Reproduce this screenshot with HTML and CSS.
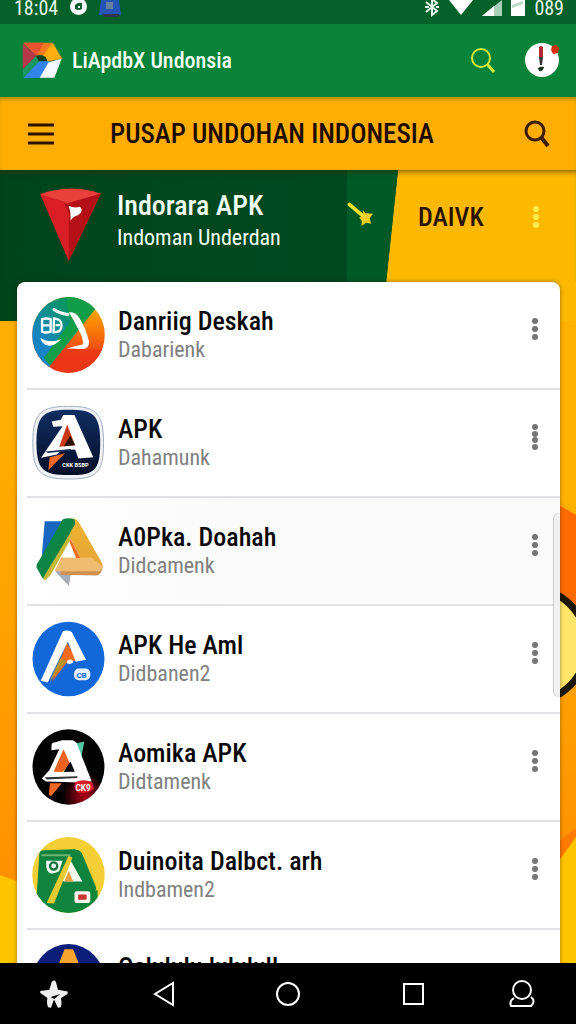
FILE: index.html
```html
<!DOCTYPE html>
<html lang="id">

<head>
  <meta charset="UTF-8">
  <meta name="viewport" content="width=device-width, initial-scale=1.0">
  <title>Pusat Unduhan Indonesia</title>
  <link rel="stylesheet" href="styles.css">
</head>

<body>
  <div class="status-bar">
    <span class="clock">18:04</span>
    <svg width="17" height="18" viewBox="0 0 17 18"><circle cx="8.500" cy="6.500" r="8.500" fill="#fff"/><path d="M5 5q3-3 7-2v6q-3 2-7 0zM8 6h2v2H8z" fill="#075f2c" fill-rule="evenodd"/></svg>
    <svg class="status-app" width="24" height="20" viewBox="0 0 24 20"><path d="M2 0h18l2 15H0z" fill="#2454b4"/><path d="M7 2h7v7H7z" fill="#6a80a0"/><path d="M3 14h17v3H6z" fill="#34334c"/></svg>
    <div class="status-icons">
      <svg width="16" height="18" viewBox="0 0 16 18" fill="none" stroke="#e8f5ec" stroke-width="2"><path d="M2 2l11 9-5 4V-1l5 4-11 9M1 7h4M12 7h3"/></svg>
      <svg width="24" height="18" viewBox="0 0 24 18"><path d="M0 0h24L12 15z" fill="#fff"/></svg>
      <svg width="20" height="18" viewBox="0 0 20 18"><path d="M20 0v16H0z" fill="#a9d0b8"/><path d="M12 6v10H0z" fill="#fff"/></svg>
      <svg width="14" height="18" viewBox="0 0 14 18"><path d="M0 0h14v16H0z" fill="#fff"/><path d="M1 5L12 1v3L1 8z" fill="#b9d8c5"/></svg>
      <span class="battery">089</span>
    </div>
  </div>

  <header class="app-bar">
    <svg class="logo" width="40" height="37" viewBox="66 124 120 110">
      <path d="M70 126h88l28 48-42 8-16-18H108l-38-38z" fill="#f57a20"/>
      <path d="M70 126h62l-22 38z" fill="#e9532d"/>
      <path d="M68 128l42 36-42 42z" fill="#b4374a"/>
      <path d="M158 126l28 48-44 6-12-17z" fill="#ffad10"/>
      <path d="M68 206l42-42 9 15-36 50H70z" fill="#199760"/>
      <path d="M70 232l49-52 30 2-29 49z" fill="#3484ec"/>
      <path d="M119 231l27-47 39-10-22 57z" fill="#f5f8ff"/>
      <path d="M108 165q18-5 30 4l4 12h-26z" fill="#13401d"/>
    </svg>
    <span class="app-name">LiApdbX Undonsia</span>
    <button class="icon-btn" aria-label="Search app">
      <svg width="26" height="26" viewBox="0 0 26 26" fill="none" stroke="#d3e83c" stroke-width="2"><circle cx="11" cy="10" r="9"/><path d="M17 16l7 8" stroke-width="3"/></svg>
    </button>
    <button class="icon-btn alert-btn" aria-label="Notifications">
      <svg width="36" height="38" viewBox="0 0 36 38"><circle cx="18" cy="18" r="17" fill="#fff"/><path d="M15 5q2-2 4 0v10h-4z" fill="#b72635"/><path d="M15 15h4l-1 8h-2z" fill="#3b3437"/><path d="M14 26q3-2 6-1-1 5-5 4z" fill="#173524"/><path d="M28 4l4-1 3 3-1 5-5 1-2-4z" fill="#d82b13"/></svg>
    </button>
  </header>

  <div class="title-bar">
    <button class="icon-btn" aria-label="Menu">
      <svg width="26" height="22" viewBox="0 0 26 22" stroke="#2b1200" stroke-width="3"><path d="M0 2h26M0 11h26M0 20h26"/></svg>
    </button>
    <h1>PUSAP UNDOHAN INDONESIA</h1>
    <button class="icon-btn" aria-label="Search downloads">
      <svg width="26" height="28" viewBox="0 0 26 28" fill="none" stroke="#3d1c00" stroke-width="3"><circle cx="11" cy="11" r="9"/><path d="M17 17l7 9" stroke-width="4"/></svg>
    </button>
  </div>

  <main>
    <svg class="backdrop" viewBox="0 0 576 793" preserveAspectRatio="none">
      <defs>
        <linearGradient id="side" x1="0" y1="0" x2="0" y2="1"><stop offset=".2" stop-color="#ffad00"/><stop offset="1" stop-color="#ff9000"/></linearGradient>
        <linearGradient id="dark" x1="0" y1="0" x2="1" y2="0"><stop offset="0" stop-color="#00441c"/><stop offset="1" stop-color="#004a20"/></linearGradient>
      </defs>
      <path d="M0 0h576v793H0z" fill="#ffc400"/>
      <path d="M0 150h200v580Q60 730 0 705z" fill="url(#side)"/>
      <path d="M500 151h76v220h-76z" fill="#ffb300"/>
      <path d="M540 320l36 21v317l-36 34z" fill="url(#side)"/>
      <path d="M540 324l36 21v150h-36z" fill="#ff6a00"/>
      <path d="M556 674l20-16v9l-20 28z" fill="#ff7a00"/>
      <circle cx="530" cy="475" r="57" fill="#ffe569" stroke="#1c1803" stroke-width="7"/>
      <path d="M370 0h206v151H370z" fill="#fcb900"/>
      <path d="M0 0h398l-16 151H0z" fill="url(#dark)"/>
      <path d="M347 0h51l-16 151h-35z" fill="#005a26"/>
    </svg>

    <section class="hero">
      <svg width="61" height="73" viewBox="120 52 181 219">
        <path d="M120 71q90-32 181-2l-96 202z" fill="#d91f25"/>
        <path d="M120 71q90-32 181-2l-96 28z" fill="#e9403c"/>
        <path d="M205 97l96-28-96 202z" fill="#b51018"/>
        <path d="M192 97l19 8v43l-8-28z" fill="#a50d16"/>
        <path d="M205 105q18 9 34 3 12 12-5 25-17 5-23 17l-1-25z" fill="#fff"/>
      </svg>
      <div class="hero-text">
        <h2>Indorara APK</h2>
        <p>Indoman Underdan</p>
      </div>
      <svg class="arrow" width="26" height="24" viewBox="140 92 79 73"><path d="M147 99l45 38" stroke="#f2e22d" stroke-width="11" stroke-linecap="round"/><path d="M188 116l8 10 23 2-10 13 4 17-15-3-14 10 1-16-8-10 13-4z" fill="#f0cf25"/></svg>
      <span class="tag">DAIVK</span>
      <button class="more more-light" aria-label="More">
        <svg width="8" height="24" viewBox="0 0 8 24"><circle cx="4" cy="4" r="3"/><circle cx="4" cy="12" r="3"/><circle cx="4" cy="20" r="3"/></svg>
      </button>
    </section>

    <ul class="card">
      <li class="row">
        <svg class="app-icon" viewBox="96 48 220 230">
          <defs>
            <clipPath id="c1"><ellipse cx="206" cy="163" rx="110" ry="115"/></clipPath>
            <linearGradient id="g1" x1="0" y1="0" x2="0" y2="1"><stop offset=".2" stop-color="#ffa000"/><stop offset=".8" stop-color="#ed3b16"/></linearGradient>
            <linearGradient id="g2" x1="1" y1="0" x2="0" y2="1"><stop offset=".3" stop-color="#0b9564"/><stop offset=".75" stop-color="#1684c4"/></linearGradient>
          </defs>
          <g clip-path="url(#c1)">
            <path d="M96 48h220v230H96z" fill="url(#g1)"/>
            <path d="M96 48h160l35 30-146 185H96z" fill="url(#g2)"/>
            <path d="M198 48h70l23 30-141 178-18-24 80-110z" fill="#129d48"/>
            <path d="M150 256l42-52 124 4v70H150z" fill="#ea3519" opacity=".7"/>
          </g>
          <path d="M162 86q18 12 42 15" fill="none" stroke="#fff" stroke-width="9" stroke-linecap="round"/>
          <path d="M207 94q20-2 31 16 22 35 30 73 0 21-17 22l-50-1q24-8 48-12 4-16-14-47-12-27-28-51z" fill="#fff"/>
          <path d="M126 115q14-4 26 0v38q-14 5-26 0zM162 113q24 1 23 22 0 20-24 20zM128 134h20M167 133h13" fill="none" stroke="#fff" stroke-width="7"/>
          <path d="M121 171q28 19 63 4-19 22-39 20-20-3-24-24z" fill="#fff"/>
        </svg>
        <div class="info"><h3>Danriig Deskah</h3><p>Dabarienk</p></div>
        <button class="more" aria-label="More"><svg width="8" height="24" viewBox="0 0 8 24"><circle cx="4" cy="4" r="3"/><circle cx="4" cy="12" r="3"/><circle cx="4" cy="20" r="3"/></svg></button>
      </li>
      <li class="row">
        <svg class="app-icon" viewBox="96 371 220 230">
          <defs><linearGradient id="g3" x1="0" y1="0" x2="0" y2="1"><stop offset="0" stop-color="#102e62"/><stop offset="1" stop-color="#050d26"/></linearGradient></defs>
          <path d="M206 375c80 0 106 16 106 110s-22 110-106 110-108-20-108-110 25-110 108-110z" fill="#eef2f7" stroke="#a5adba" stroke-width="3"/>
          <path d="M206 385c73 0 96 12 96 100s-20 98-96 98-97-16-97-98 20-100 97-100z" fill="url(#g3)"/>
          <path d="M190 401h34l57 128-45 4-10-27-43 1-12 14-48 10 65-96-28 2-5-16 28-5z" fill="#fff"/>
          <path d="M202 430l-24 67 48-4z" fill="#c73917"/><path d="M211 464l15 29-34 3z" fill="#28110c"/>
          <path d="M136 512l77-8v5l-69 7z" fill="#1b315c"/>
          <path d="M149 529l47-12-35 35-16 17z" fill="#f26725"/>
          <text x="187" y="560" class="icon-label">CKK BSBP</text>
        </svg>
        <div class="info"><h3>APK</h3><p>Dahamunk</p></div>
        <button class="more" aria-label="More"><svg width="8" height="28" viewBox="0 0 8 28"><circle cx="4" cy="4" r="3"/><circle cx="4" cy="11" r="3"/><circle cx="4" cy="17" r="3"/><circle cx="4" cy="24" r="3"/></svg></button>
      </li>
      <li class="row row-tint">
        <svg class="app-icon" viewBox="96 68 220 230">
          <defs><linearGradient id="g4" x1="0" y1="0" x2="0" y2="1"><stop offset="0" stop-color="#edb52e"/><stop offset="1" stop-color="#e6a23a"/></linearGradient></defs>
          <path d="M134 93h54l-60 108-2-12z" fill="#1766c0"/>
          <path d="M170 237l44 9-7 43-39-42z" fill="#a8abb8"/>
          <path d="M182 235h126v4q-6 17-17 18l-109-2z" fill="#cf9152"/>
          <path d="M212 85q19-3 27 14l69 122q4 12-4 22H170l14-40h57l-29-58-42 66z" fill="url(#g4)"/>
          <path d="M184 203h90l34 25q2 13-10 16H164z" fill="#f0bc72"/>
          <path d="M211 147l28 56h-51z" fill="#fff"/><path d="M212 147l30 57h-13l-21-51z" fill="#f06c22"/>
          <path d="M188 88q16-8 36-1 6 13-5 26l-79 153q-10 5-15-5l-16-29q-1-10 7-18z" fill="#0d8545"/>
          <path d="M216 121l-6 30-58 105-18 16-4-9z" fill="#c7b838"/>
        </svg>
        <div class="info"><h3>A0Pka. Doahah</h3><p>Didcamenk</p></div>
        <button class="more" aria-label="More"><svg width="8" height="24" viewBox="0 0 8 24"><circle cx="4" cy="4" r="3"/><circle cx="4" cy="12" r="3"/><circle cx="4" cy="20" r="3"/></svg></button>
      </li>
      <li class="row">
        <svg class="app-icon" viewBox="95 396 220 230">
          <ellipse cx="205" cy="511" rx="109" ry="113" fill="#1267d9"/>
          <path d="M200 461l32 54-30 4-47 61z" fill="#f36b1b"/>
          <path d="M180 508l20 10-52 60z" fill="#b99228"/>
          <path d="M188 427q15-5 27 2l43 84-31 6-24-61-61 124-21-5z" fill="#fff"/>
          <path d="M200 517q15-10 20 3-9 10-20 4z" fill="#fff"/>
          <rect x="222" y="540" width="49" height="35" rx="14" fill="#e5f1ff"/>
          <text x="229" y="568" class="icon-label label-blue">CB</text>
        </svg>
        <div class="info"><h3>APK He Aml</h3><p>Didbanen2</p></div>
        <button class="more" aria-label="More"><svg width="8" height="24" viewBox="0 0 8 24"><circle cx="4" cy="4" r="3"/><circle cx="4" cy="12" r="3"/><circle cx="4" cy="20" r="3"/></svg></button>
      </li>
      <li class="row">
        <svg class="app-icon" viewBox="94 57 220 230">
          <defs><radialGradient id="g5" cx=".72" cy=".88" r=".3"><stop offset="0" stop-color="#b00018"/><stop offset="1" stop-color="#030304"/></radialGradient></defs>
          <ellipse cx="204" cy="172" rx="109" ry="114" fill="url(#g5)"/>
          <path d="M226 101l26-6-9 46z" fill="#54c7a2"/>
          <path d="M153 103q3-7 12-6l19-6h33l11 7 46 117-33 4-105-3-13-9 12-13 11-12 30-64-24 3z" fill="#fff"/>
          <path d="M189 118l-30 68 27 1 23-24z" fill="#ec6221"/><path d="M210 155l13 31-34 1z" fill="#07090b"/>
          <path d="M132 203l99-3v5l-93 5z" fill="#333"/><path d="M148 221h36l-32 39q-10-3-7-11z" fill="#ee6824"/>
          <path d="M224 218q25-12 52 0l6 20q-25 19-53 10l-7-13z" fill="#d51d2b"/>
          <text x="225" y="246" class="icon-label label-red">CK9</text>
        </svg>
        <div class="info"><h3>Aomika APK</h3><p>Didtamenk</p></div>
        <button class="more" aria-label="More"><svg width="8" height="24" viewBox="0 0 8 24"><circle cx="4" cy="4" r="3"/><circle cx="4" cy="12" r="3"/><circle cx="4" cy="20" r="3"/></svg></button>
      </li>
      <li class="row">
        <svg class="app-icon" viewBox="94 377 220 230">
          <defs><clipPath id="c6"><ellipse cx="204" cy="492" rx="110" ry="115"/></clipPath></defs>
          <g clip-path="url(#c6)">
            <path d="M94 377h220v230H94z" fill="#f3ce35"/>
            <path d="M94 542l24 4 174-8v69H94z" fill="#0e8538"/>
            <path d="M116 426q2-9 13-9l92-3q18 1 24 13l42 101q3 11-10 15l-43 51H136q-30-7-29-28z" fill="#10833e"/>
            <path d="M122 432h88" fill="none" stroke="#6eb56d" stroke-width="6"/>
            <path d="M204 437l42 75h-53l-14-3z" fill="#f5f9ec"/><path d="M205 480l13 32h-27z" fill="#e5a141"/>
            <path d="M204 434l12 6-56 138-22-1z" fill="#e7cb31"/>
            <path d="M136 449h50l-10 32q-34 17-39-12z" fill="#f1f7ef"/><circle cx="159" cy="465" r="11" fill="none" stroke="#16713d" stroke-width="7"/>
          </g>
          <rect x="222" y="541" width="48" height="36" rx="7" fill="#fff4ec"/><rect x="233" y="551" width="26" height="16" rx="4" fill="#c33632"/>
        </svg>
        <div class="info"><h3>Duinoita Dalbct. arh</h3><p>Indbamen2</p></div>
        <button class="more" aria-label="More"><svg width="8" height="24" viewBox="0 0 8 24"><circle cx="4" cy="4" r="3"/><circle cx="4" cy="12" r="3"/><circle cx="4" cy="20" r="3"/></svg></button>
      </li>
      <li class="row row-last">
        <svg class="app-icon" viewBox="94 134 220 230">
          <ellipse cx="204" cy="249" rx="110" ry="115" fill="#0b1f78"/>
          <path d="M192 150h26l60 150h-40l-35-90-30 80h-36z" fill="#f5a52c"/>
        </svg>
        <div class="info"><h3>Oslululu !ululull</h3></div>
      </li>
      <li class="scroll-thumb" aria-hidden="true"></li>
    </ul>
  </main>

  <nav class="nav-bar">
    <button aria-label="Favorites"><svg width="28" height="28" viewBox="122 240 86 86"><path d="M158 245q8-7 13 1l6 24 30 5v7l-21 14q4 13 0 28l-9 1-12-25-9 25-9-1q-6-14-2-29l-22-15v-6l28-4z" fill="#eee"/><path d="M155 292l29-9-18 15z" fill="#000"/></svg></button>
    <button aria-label="Back"><svg width="24" height="26" viewBox="0 0 24 26"><path d="M21 2v22L3 13z"/></svg></button>
    <button class="home" aria-label="Home"><svg width="26" height="26" viewBox="0 0 26 26"><circle cx="13" cy="13" r="11"/></svg></button>
    <button aria-label="Recent apps"><svg width="24" height="26" viewBox="0 0 24 26"><path d="M3 3h19v20H3z"/></svg></button>
    <button aria-label="Profile"><svg width="28" height="28" viewBox="0 0 28 28"><circle cx="14" cy="10" r="9"/><path d="M6 18q-5 3-3 8h20q5-5 0-9"/></svg></button>
  </nav>
</body>

</html>
```
FILE: styles.css
```css
* {
  box-sizing: border-box;
}

body {
  margin: 0;
  height: 100vh;
  display: flex;
  flex-direction: column;
  overflow: hidden;
  font-family: "Roboto Condensed", "Liberation Sans Narrow", Roboto, sans-serif;
  color: #080808;
}

h1,
h2,
h3,
p {
  margin: 0;
  font-weight: 500;
  white-space: nowrap;
}

button {
  padding: 0;
  border: none;
  background: none;
  display: flex;
  align-items: center;
  justify-content: center;
  cursor: pointer;
}

svg {
  display: block;
  flex-shrink: 0;
}

.status-bar {
  height: 24px;
  flex-shrink: 0;
  display: flex;
  align-items: flex-start;
  gap: 12px;
  padding: 0 12px 0 14px;
  background: #036129;
  color: #e8f5ec;
  font-size: 20px;
  line-height: 16px;
}

.status-icons {
  margin-left: auto;
  display: flex;
  gap: 9px;
}

.app-bar {
  height: 73px;
  flex-shrink: 0;
  display: flex;
  align-items: center;
  padding: 0 16px 0 22px;
  background: #088339;
  color: #f2fff5;
}

.app-name {
  margin-left: 10px;
  margin-right: auto;
  font-size: 22px;
  font-weight: 500;
}

.alert-btn {
  margin-left: 28px;
}

.title-bar {
  height: 73px;
  flex-shrink: 0;
  display: flex;
  align-items: center;
  padding: 0 26px 0 28px;
  background: #ffae00;
  box-shadow: inset 0 4px 4px -2px #a58a00;
}

.title-bar h1 {
  margin-left: 56px;
  margin-right: auto;
  font-size: 27px;
  color: #1c0b00;
}

main {
  position: relative;
  flex: 1;
  min-height: 0;
  overflow: hidden;
}

.backdrop {
  position: absolute;
  inset: 0;
  width: 100%;
  height: 100%;
  z-index: -1;
}

.hero {
  height: 112px;
  display: flex;
  align-items: flex-start;
  padding: 18px 36px 0 40px;
  box-shadow: inset 0 5px 5px -3px rgba(60, 45, 0, 0.6);
}

.hero-text {
  flex: 1;
  margin-left: 16px;
  color: #f2fff5;
}

.hero-text h2 {
  font-size: 28px;
  line-height: 36px;
}

.hero-text p {
  font-size: 22px;
  line-height: 28px;
  font-weight: 400;
}

.arrow {
  margin-top: 14px;
}

.tag {
  width: 114px;
  margin-left: 45px;
  font-size: 26px;
  line-height: 58px;
  font-weight: 500;
  color: #2b1200;
}

.card {
  position: relative;
  list-style: none;
  margin: 0 16px 0 17px;
  padding: 0;
  background: #fff;
  border-radius: 8px 8px 0 0;
  box-shadow: 0 0 4px rgba(0, 0, 0, 0.4);
}

.row {
  height: 108px;
  display: flex;
  align-items: center;
  margin-left: 10px;
  padding: 0 21px 0 5px;
  border-bottom: 2px solid #e2e2e6;
}

.row-tint {
  background: linear-gradient(to right, #fff, #fafafa 40%);
}

/* the list runs on below the nav bar */
.row-last {
  align-items: flex-start;
  padding-top: 14px;
}

.row-last .info {
  margin-top: 8px;
}

.app-icon {
  width: 73px;
  height: 76px;
}

.icon-label {
  font: bold 17px Roboto, sans-serif;
  fill: #fff;
}

.label-blue {
  font-size: 24px;
  fill: #1267d9;
}

.label-red {
  font-size: 25px;
}

.info {
  flex: 1;
  margin-left: 13px;
}

.info h3 {
  font-size: 26px;
  line-height: 30px;
}

.info p {
  font-size: 22px;
  line-height: 28px;
  font-weight: 400;
  color: #808080;
}

.more {
  padding-bottom: 12px;
  fill: #757575;
}

.more-light {
  padding: 17px 0 0;
  fill: #ffee4a;
}

.scroll-thumb {
  position: absolute;
  top: 231px;
  right: 0;
  width: 6px;
  height: 184px;
  border-radius: 6px 0 0 6px;
  background: #f1f1f1;
  box-shadow: -1px 0 1px #ccc;
}

.nav-bar {
  height: 61px;
  flex-shrink: 0;
  display: flex;
  align-items: center;
  justify-content: space-between;
  padding: 0 40px;
  background: #000;
  fill: none;
  stroke: #fff;
  stroke-width: 2;
}

.nav-bar .home {
  margin: 0 16px;
}

.nav-bar button:first-child {
  stroke: none;
}
```
